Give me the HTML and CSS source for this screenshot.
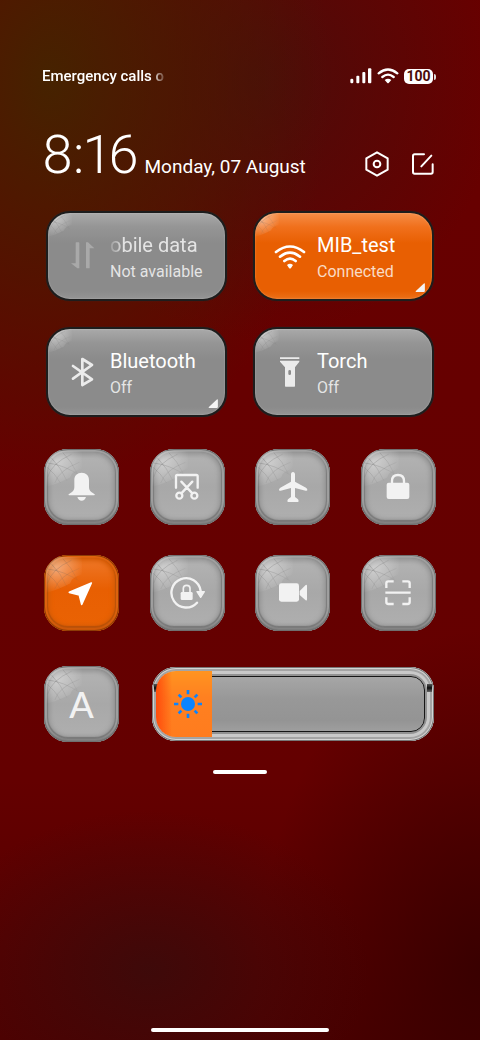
FILE: index.html
```html
<!DOCTYPE html>
<html lang="en">
<head>
<meta charset="utf-8">
<meta name="viewport" content="width=device-width, initial-scale=1">
<title>Control centre</title>
<link rel="stylesheet" href="styles.css">
</head>
<body>
<svg class="defs" aria-hidden="true">
  <defs>
    <radialGradient id="shine" gradientUnits="userSpaceOnUse" cx="24" cy="24" r="70">
      <stop offset="0" stop-color="#fff" stop-opacity="0.42"/>
      <stop offset="1" stop-color="#fff" stop-opacity="0"/>
    </radialGradient>
    <radialGradient id="web" gradientUnits="userSpaceOnUse" cx="20" cy="20" r="76">
      <stop offset="0" stop-color="#555" stop-opacity="0.34"/>
      <stop offset="1" stop-color="#555" stop-opacity="0.05"/>
    </radialGradient>
    <symbol id="glare" viewBox="0 0 90 90">
      <path fill="url(#shine)" d="M0 0H90V44Q64 50 60 66Q34 80 0 90Z"/>
      <path fill="none" stroke="url(#web)" stroke-width="2" d="M2 40Q24 58 36 80M14 18Q38 42 52 74M42 4Q64 26 78 56M4 66Q12 32 64 8M22 80Q32 48 84 28M4 30Q44 34 86 62"/>
    </symbol>
  </defs>
</svg>

<header class="status">
  <span class="carrier">Emergency calls o</span>
  <div class="indicators">
    <svg class="signal" viewBox="0 0 66 48" aria-hidden="true"><g fill="#fff"><rect x="1" y="32" width="9" height="14" rx="4"/><rect x="19" y="23" width="9" height="23" rx="3"/><rect x="37" y="12" width="9" height="34" rx="3"/><rect x="54" y="1" width="10" height="45" rx="3"/></g></svg>
    <svg class="wifi-small" viewBox="0 0 66 48" aria-hidden="true"><g fill="none" stroke="#fff" stroke-width="7" stroke-linecap="round"><path d="M5 16Q33 -7 61 16M16 27Q33 13 50 27"/></g><path fill="#fff" d="M23 36Q33 28 43 36L35 45Q33 47 31 45Z"/></svg>
    <span class="battery">100</span>
  </div>
</header>

<main class="panel">
  <section class="heading">
    <div class="when">
      <time class="clock">8:16</time>
      <span class="date">Monday, 07 August</span>
    </div>
    <div class="actions">
      <button class="action" aria-label="Settings"><svg viewBox="0 0 78 78"><g fill="none" stroke="#fff" stroke-width="6" stroke-linejoin="round"><path d="M39 4L71 22V56L39 74L7 56V22Z"/><circle cx="39" cy="39" r="10"/></g></svg></button>
      <button class="action" aria-label="Edit"><svg viewBox="0 0 78 78"><path fill="none" stroke="#fff" stroke-width="6" stroke-linecap="round" d="M42 10H14Q9 10 9 15V63Q9 68 14 68H63Q68 68 68 63V40M64 14L34 46"/></svg></button>
    </div>
  </section>

  <section class="tiles">
    <button class="tile">
      <svg class="tile-glare" aria-hidden="true"><use href="#glare"/></svg>
      <svg class="tile-icon dim" viewBox="0 0 102 102" aria-hidden="true"><path fill="currentColor" d="M29 12Q29 10 31 10H38Q40 10 40 12V88H34L15 73H29ZM60 86V10H66L85 28H71V86Q71 88 69 88H62Q60 88 60 86Z"/></svg>
      <span class="tile-text"><span class="tile-name scrolled">obile data</span><span class="tile-state">Not available</span></span>
    </button>
    <button class="tile on" aria-pressed="true">
      <svg class="tile-glare" aria-hidden="true"><use href="#glare"/></svg>
      <svg class="tile-icon" viewBox="0 0 102 102" aria-hidden="true"><g fill="none" stroke="currentColor" stroke-width="8" stroke-linecap="round"><path d="M9 39Q51 6 93 39M21 53Q51 29 81 53M34 66Q51 52 68 66"/></g><path fill="currentColor" d="M42 78Q51 71 60 78L54 87Q51 90 48 87Z"/></svg>
      <span class="tile-text"><span class="tile-name">MIB_test</span><span class="tile-state">Connected</span></span>
      <svg class="more" viewBox="0 0 28 26" aria-hidden="true"><path fill="currentColor" d="M26 1Q28 0 28 3V23Q28 26 25 26H3Q0 26 2 23Z"/></svg>
    </button>
    <button class="tile">
      <svg class="tile-glare" aria-hidden="true"><use href="#glare"/></svg>
      <svg class="tile-icon" viewBox="0 0 102 102" aria-hidden="true"><path fill="none" stroke="currentColor" stroke-width="8" stroke-linecap="round" stroke-linejoin="round" d="M21 33L78 73L49 90V12L78 30L21 71"/></svg>
      <span class="tile-text"><span class="tile-name">Bluetooth</span><span class="tile-state">Off</span></span>
      <svg class="more" viewBox="0 0 28 26" aria-hidden="true"><path fill="currentColor" d="M26 1Q28 0 28 3V23Q28 26 25 26H3Q0 26 2 23Z"/></svg>
    </button>
    <button class="tile">
      <svg class="tile-glare" aria-hidden="true"><use href="#glare"/></svg>
      <svg class="tile-icon" viewBox="0 0 102 102" aria-hidden="true"><path fill="currentColor" fill-rule="evenodd" d="M21 7H79V12H21ZM21 17H79V20L66 37V93Q66 95 64 95H38Q36 95 36 93V37L21 20ZM50 45Q46 45 46 49V56Q46 60 50 60Q54 60 54 56V49Q54 45 50 45Z"/></svg>
      <span class="tile-text"><span class="tile-name">Torch</span><span class="tile-state">Off</span></span>
    </button>
  </section>

  <section class="keys">
    <button class="key" aria-label="Mute">
      <svg class="key-glare" aria-hidden="true"><use href="#glare"/></svg>
      <svg class="key-icon" viewBox="0 0 108 108"><path fill="currentColor" d="M53 11C40 11 31 20 31 33V54C31 61 29 65 24 69L14 76Q12 79 16 79H90Q94 79 92 76L82 69C77 65 75 61 75 54V33C75 20 66 11 53 11ZM40 84H66C64 91 59 95 53 95S42 91 40 84Z"/></svg>
    </button>
    <button class="key" aria-label="Screenshot">
      <svg class="key-glare" aria-hidden="true"><use href="#glare"/></svg>
      <svg class="key-icon" viewBox="0 0 108 108"><g fill="none" stroke="currentColor" stroke-width="7" stroke-linecap="round"><path d="M21 56V22Q21 18 25 18H82Q86 18 86 22V56M37 38L70 73M70 38L37 73"/><circle cx="31" cy="80" r="9"/><circle cx="76" cy="80" r="9"/></g></svg>
    </button>
    <button class="key" aria-label="Aeroplane mode">
      <svg class="key-glare" aria-hidden="true"><use href="#glare"/></svg>
      <svg class="key-icon" viewBox="0 0 108 108"><path fill="currentColor" d="M54 9C50 9 48 12 48 16V38L16 56Q11 59 12 64Q13 66 17 65L48 57V84L39 91Q36 95 38 99H70Q72 95 69 91L60 84V57L92 65Q96 66 97 64Q98 59 93 56L60 38V16C60 12 58 9 54 9Z"/></svg>
    </button>
    <button class="key" aria-label="Lock screen">
      <svg class="key-glare" aria-hidden="true"><use href="#glare"/></svg>
      <svg class="key-icon" viewBox="0 0 108 108"><rect x="20" y="41" width="68" height="49" rx="6" fill="currentColor"/><path fill="none" stroke="currentColor" stroke-width="7" d="M36 42V36Q36 18 54 18T72 36V42"/></svg>
    </button>
    <button class="key on" aria-label="Location" aria-pressed="true">
      <svg class="key-glare" aria-hidden="true"><use href="#glare"/></svg>
      <svg class="key-icon" viewBox="0 0 108 108"><path fill="currentColor" stroke="currentColor" stroke-width="5" stroke-linejoin="round" d="M82 24L16 52L46 60L53 88Z"/></svg>
    </button>
    <button class="key" aria-label="Rotation lock">
      <svg class="key-glare" aria-hidden="true"><use href="#glare"/></svg>
      <svg class="key-icon" viewBox="0 0 108 108"><path fill="none" stroke="currentColor" stroke-width="7" stroke-linecap="round" d="M84 83A44 44 0 1 1 95 48"/><path fill="currentColor" stroke="currentColor" stroke-width="4" stroke-linejoin="round" d="M84 50H106L95 67Z"/><rect x="35" y="51" width="36" height="24" rx="4" fill="currentColor"/><path fill="none" stroke="currentColor" stroke-width="5" stroke-linecap="round" d="M43 52V40Q43 31 53 31T63 40V50"/></svg>
    </button>
    <button class="key" aria-label="Screen recorder">
      <svg class="key-glare" aria-hidden="true"><use href="#glare"/></svg>
      <svg class="key-icon" viewBox="0 0 108 108"><rect x="12" y="25" width="60" height="55" rx="7" fill="currentColor"/><path fill="currentColor" d="M74 48L92 30Q96 28 96 33V73Q96 78 92 76L74 60Z"/></svg>
    </button>
    <button class="key" aria-label="Scanner">
      <svg class="key-glare" aria-hidden="true"><use href="#glare"/></svg>
      <svg class="key-icon" viewBox="0 0 108 108"><path fill="none" stroke="currentColor" stroke-width="7" d="M19 39V25Q19 19 25 19H41M67 19H83Q89 19 89 25V39M16 53H92M19 67V81Q19 87 25 87H41M67 87H83Q89 87 89 81V67"/></svg>
    </button>
  </section>

  <section class="keys brightness-row">
    <button class="key" aria-label="Automatic brightness">
      <svg class="key-glare" aria-hidden="true"><use href="#glare"/></svg>
      <span class="letter">A</span>
    </button>
    <div class="slider">
      <div class="well"></div>
      <div class="fill">
        <svg class="sun" viewBox="0 0 84 84" aria-hidden="true"><circle cx="42" cy="42" r="21" fill="#0a84ff"/><path stroke="#0a84ff" stroke-width="8" d="M42 0V13M42 71V84M0 42H13M71 42H84M14 14L22 22M62 62L70 70M70 14L62 22M22 62L14 70"/></svg>
      </div>
      <input class="range" type="range" min="0" max="100" value="18" aria-label="Brightness">
    </div>
  </section>

  <div class="handle"></div>
</main>

<div class="home-bar"></div>
</body>
</html>
```

FILE: styles.css
```css
* { box-sizing: border-box; }

body {
  margin: 0;
  min-height: 100vh;
  display: flex;
  flex-direction: column;
  padding: 64px 0 8px;
  color: #fff;
  font-family: Roboto, "Liberation Sans", sans-serif;
  background:
    radial-gradient(ellipse 280px 400px at 50px 80px, rgba(68, 36, 0, 0.95), rgba(72, 30, 0, 0.6) 50%, rgba(80, 10, 0, 0) 100%),
    radial-gradient(ellipse 240px 260px at 260px 80px, rgba(64, 18, 14, 0.7), rgba(64, 18, 14, 0) 100%),
    radial-gradient(ellipse 220px 160px at 150px 970px, rgba(56, 12, 12, 0.8), rgba(56, 12, 12, 0) 100%),
    radial-gradient(ellipse 220px 340px at 100% 970px, rgba(48, 0, 0, 0.75), rgba(48, 0, 0, 0) 100%),
    linear-gradient(#680000, #640000 75%, #500000);
}

button {
  margin: 0;
  padding: 0;
  border: 0;
  background: none;
  color: inherit;
  font: inherit;
  text-align: left;
}

svg { display: block; }

.defs { position: absolute; width: 0; height: 0; }

.status {
  display: flex;
  align-items: center;
  justify-content: space-between;
  height: 24px;
  padding: 0 44px 0 42px;
}

.carrier {
  font-size: 15px;
  font-weight: 500;
  line-height: 24px;
  -webkit-mask-image: linear-gradient(to right, #000 calc(100% - 12px), rgba(0, 0, 0, 0.2));
  mask-image: linear-gradient(to right, #000 calc(100% - 12px), rgba(0, 0, 0, 0.2));
}

.indicators { display: flex; align-items: center; gap: 5px; }
.signal, .wifi-small { width: 22px; height: 16px; }

.battery {
  position: relative;
  width: 29px;
  height: 15px;
  margin-right: 3px;
  border-radius: 5px;
  background: #fff;
  color: #4a0c08;
  font-size: 14px;
  font-weight: 700;
  line-height: 15px;
  text-align: center;
}

.battery::after {
  content: "";
  position: absolute;
  top: 5px;
  right: -3px;
  width: 2px;
  height: 6px;
  border-radius: 0 2px 2px 0;
  background: #ddd;
}

.panel { display: flex; flex-direction: column; }

.heading {
  display: flex;
  align-items: flex-end;
  justify-content: space-between;
  margin-top: 37px;
  padding: 0 44px 0 42px;
}

.when { display: flex; align-items: baseline; gap: 6px; white-space: nowrap; }
.clock { font-size: 54px; font-weight: 300; line-height: 60px; font-variant-numeric: proportional-nums; }
.date { font-size: 19px; line-height: 24px; }

.actions { display: flex; gap: 20px; padding-bottom: 8px; }
.action svg { width: 26px; height: 26px; }

.tiles {
  display: grid;
  grid-template-columns: 1fr 1fr;
  gap: 26px;
  margin-top: 26px;
  padding: 0 46px;
}

.tile {
  position: relative;
  display: flex;
  align-items: center;
  gap: 10px;
  height: 90px;
  padding: 0 0 0 18px;
  border: 2px solid #1d1d1d;
  border-radius: 24px;
  overflow: hidden;
  color: #ebebeb;
  background: linear-gradient(#a9a9a9, #959595 14px, #8b8b8b 30px, #8b8b8b 78px, #949494);
  box-shadow: 0 0 1px #333, inset 0 0 2px 0 rgba(255, 255, 255, 0.35);
}

.tile.on {
  color: #fff;
  background: linear-gradient(#f68d47, #f0701c 14px, #e85f02 30px, #e85f02 78px, #ec7018);
}

.tile-glare { position: absolute; top: 0; left: 0; width: 24px; height: 24px; }
.tile-icon { flex: none; width: 34px; height: 34px; }
.tile-icon.dim { color: #a9a9a9; }
.tile-text { display: flex; flex-direction: column; padding-top: 4px; white-space: nowrap; }
.tile-name { font-size: 20px; line-height: 28px; color: #fff; }
.tile-state { font-size: 16px; line-height: 26px; color: rgba(255, 255, 255, 0.78); }

.scrolled {
  color: #e4e4e4;
  -webkit-mask-image: linear-gradient(to right, rgba(0, 0, 0, 0.2), #000 14px);
  mask-image: linear-gradient(to right, rgba(0, 0, 0, 0.2), #000 14px);
}

.more { position: absolute; right: 7px; bottom: 7px; width: 10px; height: 9px; color: #f4f4f4; }

.keys {
  display: grid;
  grid-template-columns: repeat(4, 75px);
  justify-content: space-between;
  row-gap: 30px;
  margin-top: 32px;
  padding: 0 44px;
}

.key {
  position: relative;
  display: grid;
  place-items: center;
  height: 76px;
  border-radius: 24px;
  overflow: hidden;
  color: #f2f2f2;
  background: linear-gradient(#b4b4b4, #a8a8a8 50%, #b0b0b0);
  box-shadow:
    inset 0 0 0 1px #6f6f6f,
    inset 0 -3px 2px 0 #7c7c7c,
    inset 0 0 1px 3px #a2a2a2,
    inset 0 -1px 1px 4px #787878,
    inset 0 0 4px 6px #959595;
}

.key.on {
  color: #fff;
  background: linear-gradient(#ef7a2c, #e85f02 45%, #ea6304);
  box-shadow:
    inset 0 0 0 1px #8d3c06,
    inset 0 -3px 2px 0 #c95608,
    inset 0 0 1px 3px #e0640e,
    inset 0 -1px 1px 4px #b5500a,
    inset 0 0 4px 6px #d65c06;
}

.key-glare { position: absolute; top: 2px; left: 2px; width: 36px; height: 36px; }
.key-icon { position: relative; width: 36px; height: 36px; }
.letter { position: relative; font-family: Lato, sans-serif; font-size: 36px; font-weight: 500; line-height: 40px; }

.brightness-row { margin-top: 35px; }

.slider {
  position: relative;
  grid-column: 2 / 5;
  margin: 1px 2px;
  padding: 9px;
  border-radius: 24px;
  background: #c4c4c4;
  box-shadow:
    inset 0 0 0 1px #777,
    inset 0 0 0 2px #d4d4d4,
    inset 0 0 0 4px #a4a4a4,
    inset 0 0 0 7px #c9c9c9,
    inset 0 0 0 9px #929292;
}

.slider::before, .slider::after {
  content: "";
  position: absolute;
  top: 17px;
  width: 5px;
  height: 8px;
  background: linear-gradient(#555, #0c0c0c 50%, #666);
}

.slider::before { left: 2px; }
.slider::after { right: 2px; }

.well {
  height: 100%;
  border: 1px solid #161616;
  border-radius: 14px;
  background: linear-gradient(#a6a6a6, #989898 40%, #949494 80%, #9e9e9e);
}

.fill {
  position: absolute;
  z-index: 1;
  top: 4px;
  bottom: 4px;
  left: 4px;
  width: 20%;
  display: grid;
  place-items: center;
  padding-left: 8px;
  border-radius: 20px 0 0 20px;
  background:
    linear-gradient(to right, rgba(255, 70, 10, 0.9), rgba(255, 110, 20, 0) 16px),
    linear-gradient(#ff9420, #ff8020 40%, #ff7c1e);
}

.sun { width: 28px; height: 28px; }

.range {
  position: absolute;
  z-index: 2;
  inset: 4px;
  margin: 0;
  width: auto;
  appearance: none;
  -webkit-appearance: none;
  background: transparent;
}

.range::-webkit-slider-thumb {
  -webkit-appearance: none;
  width: 12px;
  height: 66px;
  background: transparent;
}

.handle {
  align-self: center;
  width: 54px;
  height: 4px;
  margin-top: 28px;
  border-radius: 2px;
  background: #fff;
}

.home-bar {
  align-self: center;
  width: 37%;
  height: 4px;
  margin-top: auto;
  border-radius: 2px;
  background: #fff;
}
```
